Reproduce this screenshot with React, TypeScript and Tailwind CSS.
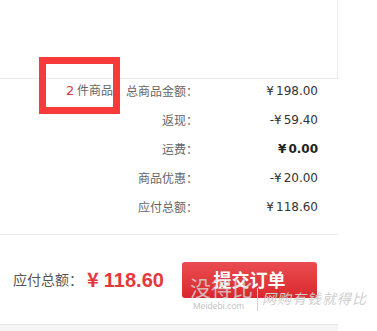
import React from 'react'

const rows = [
  { label: '总商品金额：', sign: '', value: '198.00', bold: false },
  { label: '返现：', sign: '-', value: '59.40', bold: false },
  { label: '运费：', sign: '', value: '0.00', bold: true },
  { label: '商品优惠：', sign: '-', value: '20.00', bold: false },
  { label: '应付总额：', sign: '', value: '118.60', bold: false },
]

const cn = { fontFamily: '"Noto Sans CJK SC", "Liberation Sans", sans-serif' }
const num = { fontFamily: '"DejaVu Sans", "Noto Sans CJK SC", sans-serif' }

export default function App() {
  return (
    <div className="relative w-[377px] h-[331px] bg-white overflow-hidden text-[#666]" style={cn}>
      <div className="w-[338px] h-[79px] border-r border-b border-[#ececec]" />

      <div className="flex flex-col gap-[5px]">
        {rows.map((r, i) => (
          <div key={r.label} className="flex h-[24px] items-center text-[12px] whitespace-nowrap">
            <span className="w-[126px] pr-[13px] text-right">
              {i === 0 && (
                <>
                  <span className="text-[#e4393c] text-[13px]" style={num}>2</span> 件商品
                </>
              )}
            </span>
            <span className="w-[72px] text-right">{r.label}</span>
            <span
              className={`w-[120px] text-right text-[12px] ${r.bold ? 'font-bold text-[#222]' : 'text-[#333]'}`}
              style={num}
            >
              {r.sign}¥<span className="ml-[2px]">{r.value}</span>
            </span>
          </div>
        ))}
      </div>

      <div className="mt-[15px] w-[338px] border-t border-[#ececec] h-[90px] flex items-center pl-[13px] whitespace-nowrap">
        <span className="text-[14px] text-[#555]">应付总额：</span>
        <span className="ml-[4px] text-[20px] font-bold text-[#e4393c] flex items-baseline">
          <span className="mr-[5px]">¥</span>
          <span style={{ fontFamily: '"Liberation Sans", sans-serif' }}>118.60</span>
        </span>
        <button className="ml-[18px] w-[135px] h-[36px] rounded-[3px] bg-gradient-to-b from-[#ea4c51] to-[#d9262c] text-white text-[18px] font-bold">
          提交订单
        </button>
      </div>

      <div className="w-[338px] h-[10px] border-t border-[#e6e6e6] bg-[#f5f5f5]" />

      {/* red annotation box */}
      <div className="absolute left-[39px] top-[57px] w-[81px] h-[57px] border-[7px] border-[#f73b3b]" />

      {/* watermark */}
      <div className="absolute left-[190px] top-[277px] text-[21px] leading-none text-[#d8d8d8] opacity-80">没得比</div>
      <div
        className="absolute left-[193px] top-[302px] text-[9px] leading-none text-[#c4c4c4]"
        style={{ fontFamily: '"Liberation Sans", sans-serif' }}
      >
        Meidebi.com
      </div>
      <div className="absolute left-[257px] top-[288px] w-px h-[23px] bg-[#cfcfcf]" />
      <div
        className="absolute left-[262px] top-[291px] text-[14px] leading-none text-[#cfcfcf] italic tracking-[1px]"
        style={{ fontFamily: '"Noto Sans CJK SC", serif' }}
      >
        网购有钱就得比
      </div>
    </div>
  )
}
